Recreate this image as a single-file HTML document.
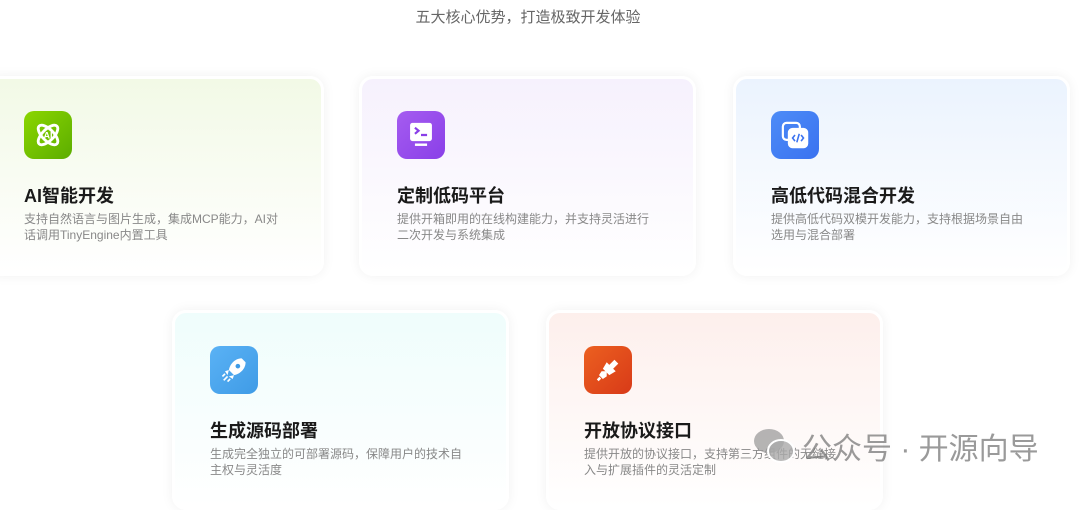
<!DOCTYPE html><html><head><meta charset="utf-8"><style>
*{margin:0;padding:0;box-sizing:border-box}
body{width:1080px;height:490px;overflow:hidden;background:#fff;font-family:"Liberation Sans","Noto Sans CJK SC",sans-serif;position:relative}
.h{position:absolute;top:6px;left:0;width:1056px;text-align:center;color:#666;font-size:15px}
.c{position:absolute;width:337px;height:200px;border-radius:14px;border:3px solid #fff;box-shadow:0 0 12px rgba(0,0,0,.06)}
.i{position:absolute;left:34px;top:32px;width:48px;height:48px;border-radius:10px;display:flex;align-items:center;justify-content:center}
.t{position:absolute;left:34px;top:103px;font-size:18px;font-weight:bold;color:#1a1a1a}
.d{position:absolute;left:34px;top:132px;width:258px;font-size:12px;line-height:16px;color:#888}
.wm{position:absolute;left:752px;top:424px;font-size:30px;color:rgba(120,120,120,.75);display:flex;align-items:center;gap:4px}
</style></head><body>
<div class="h">五大核心优势，打造极致开发体验</div>

<div class="c" style="left:-13px;top:76px;background:linear-gradient(#f2f9e6,#fff)">
<div class="i" style="background:linear-gradient(135deg,#8bd600,#5cad00)"><svg width="32" height="32" viewBox="0 0 28 28" fill="none" stroke="#fff" stroke-width="2.5"><ellipse cx="14" cy="14" rx="11" ry="5" transform="rotate(45 14 14)"/><ellipse cx="14" cy="14" rx="11" ry="5" transform="rotate(-45 14 14)"/><text x="14" y="17" font-size="8" fill="#fff" stroke="none" text-anchor="middle" font-weight="bold">AI</text></svg></div>
<div class="t">AI智能开发</div><div class="d">支持自然语言与图片生成，集成MCP能力，AI对话调用TinyEngine内置工具</div></div>

<div class="c" style="left:359px;top:76px;background:linear-gradient(#f6f1fd,#fff)">
<div class="i" style="left:35px;background:linear-gradient(135deg,#a55cf0,#8a3fe8)"><svg width="34" height="34" viewBox="0 0 28 28"><rect x="5" y="4" width="18" height="15" rx="2" fill="#fff"/><path d="M9 8l3 2.5-3 2.5M14 14h5" stroke="#8a3fe8" stroke-width="1.8" fill="none"/><rect x="9" y="21" width="10" height="2" fill="#fff"/></svg></div>
<div class="t" style="left:35px">定制低码平台</div><div class="d" style="left:35px">提供开箱即用的在线构建能力，并支持灵活进行二次开发与系统集成</div></div>

<div class="c" style="left:733px;top:76px;background:linear-gradient(#ebf3fe,#fff)">
<div class="i" style="left:35px;background:linear-gradient(135deg,#4d8cf7,#3a72f0)"><svg width="34" height="34" viewBox="0 0 28 28" fill="none" stroke="#fff" stroke-width="1.8"><rect x="4" y="4" width="14" height="14" rx="3"/><rect x="9" y="9" width="15" height="15" rx="3" fill="#fff"/><path d="M14 14l-2 2.5 2 2.5M19 14l2 2.5-2 2.5M17.5 13l-2 7" stroke="#3a72f0" stroke-width="1.3"/></svg></div>
<div class="t" style="left:35px">高低代码混合开发</div><div class="d" style="left:35px">提供高低代码双模开发能力，支持根据场景自由选用与混合部署</div></div>

<div class="c" style="left:172px;top:310px;height:200px;background:linear-gradient(#effdfc,#fff)">
<div class="i" style="left:35px;top:33px;background:linear-gradient(135deg,#5ab2f5,#3f9be6)"><svg width="36" height="36" viewBox="0 0 28 28"><path d="M20 5c-5 0-9 4-10 9l4 4c5-1 9-5 9-10z" fill="#fff"/><path d="M10 14l-3 1 2 3zM14 18l-1 3-3-2z" fill="#fff"/><circle cx="17" cy="11" r="1.8" fill="#3f9be6"/><path d="M6 22l3-3M5 19l2-2M9 23l2-2" stroke="#fff" stroke-width="1.3"/></svg></div>
<div class="t" style="left:35px;top:104px">生成源码部署</div><div class="d" style="left:35px;top:133px">生成完全独立的可部署源码，保障用户的技术自主权与灵活度</div></div>

<div class="c" style="left:546px;top:310px;height:200px;background:linear-gradient(#fdefec,#fff)">
<div class="i" style="left:35px;top:33px;background:linear-gradient(135deg,#ec6020,#d83a18)"><svg width="36" height="36" viewBox="0 0 28 28" fill="#fff"><path d="M15 10l4-4 3 3-4 4 2 2-5 3-5-5 3-5z"/><path d="M13 15l-4 0-2 3 3 3 3-2z"/><path d="M6 22l2-2" stroke="#fff" stroke-width="2"/></svg></div>
<div class="t" style="left:35px;top:104px">开放协议接口</div><div class="d" style="left:35px;top:133px">提供开放的协议接口，支持第三方组件的无缝接入与扩展插件的灵活定制</div></div>

<div class="wm"><svg width="46" height="40" viewBox="0 0 46 40"><ellipse cx="17" cy="15" rx="15" ry="12" fill="rgba(150,150,150,.7)"/><ellipse cx="29" cy="25" rx="13" ry="11" fill="rgba(170,170,170,.8)" stroke="#fff" stroke-width="2"/></svg><span>公众号 · 开源向导</span></div>
</body></html>
